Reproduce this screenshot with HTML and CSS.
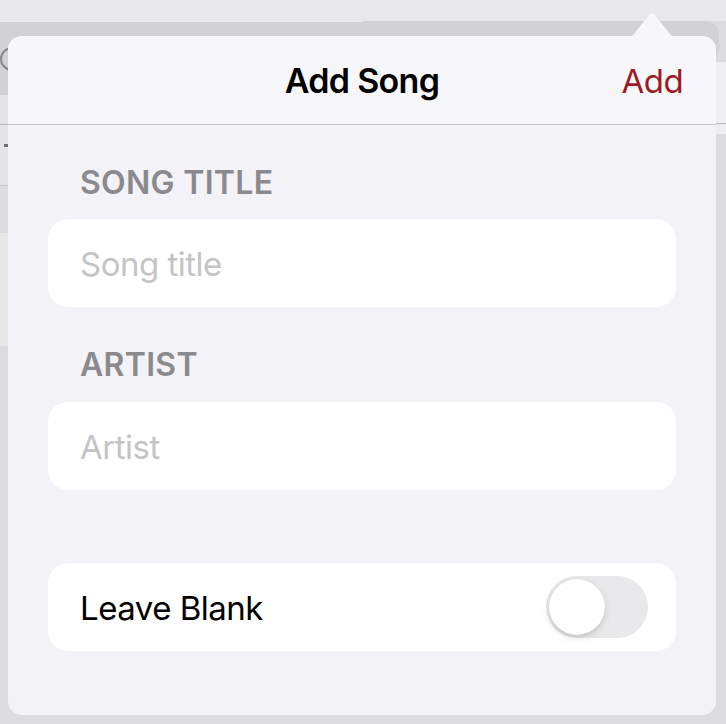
FILE: index.html
```html
<!DOCTYPE html>
<html lang="en">
<head>
<meta charset="utf-8">
<title>Add Song</title>
<link rel="stylesheet" href="styles.css">
</head>
<body>
<div class="backdrop">
  <div class="bg-col bg-left">
    <div class="bg-strip"></div>
    <div class="bg-bar"><span class="bg-ring"></span></div>
    <div class="bg-light bg-light-a"></div>
    <div class="bg-rule"></div>
    <div class="bg-light bg-light-b"><span class="bg-dash"></span></div>
    <div class="bg-rule bg-rule-soft"></div>
    <div class="bg-gap"></div>
    <div class="bg-tile"></div>
  </div>
  <div class="bg-col bg-right">
    <div class="bg-strip bg-strip-r"></div>
    <div class="bg-bar bg-bar-r"></div>
    <div class="bg-light bg-light-r"></div>
    <div class="bg-rule"></div>
    <div class="bg-light bg-light-r2"></div>
  </div>
</div>

<div class="popover">
  <svg class="arrow" width="52" height="26" viewBox="0 0 52 26" aria-hidden="true">
    <path d="M0 26 C4 26 6 25 8 23 L22.6 4.4 Q26 0 29.4 4.4 L44 23 C46 25 48 26 52 26 Z" fill="#f7f7f9"/>
  </svg>
  <header class="nav">
    <h1 class="nav-title">Add Song</h1>
    <button class="nav-action">Add</button>
  </header>
  <main class="form">
    <div class="label label-first">SONG TITLE</div>
    <div class="card"><span class="placeholder">Song title</span></div>
    <div class="label">ARTIST</div>
    <div class="card"><span class="placeholder">Artist</span></div>
    <div class="card card-toggle">
      <span class="row-text">Leave Blank</span>
      <span class="switch"><span class="knob"></span></span>
    </div>
  </main>
</div>
</body>
</html>
```

FILE: styles.css
```css
html, body {
  margin: 0;
  padding: 0;
}
body {
  width: 726px;
  height: 724px;
  overflow: hidden;
  position: relative;
  background: #dcdce0;
  font-family: "Inter", "Noto Sans", sans-serif;
  -webkit-font-smoothing: antialiased;
}

/* ---------- dimmed background ---------- */
.backdrop {
  display: flex;
  width: 726px;
  height: 724px;
}
.bg-col {
  flex: 1;
  display: flex;
  flex-direction: column;
}
.bg-strip {
  height: 22px;
  background: #e8e8ea;
}
.bg-bar {
  height: 73px;
  background: #d2d2d5;
  display: flex;
  align-items: center;
}
.bg-ring {
  width: 20px;
  height: 20px;
  border: 2.5px solid #88888d;
  border-radius: 50%;
  margin-left: 0;
}
.bg-light {
  background: #e4e4e6;
}
.bg-light-a { height: 29px; }
.bg-rule {
  height: 1px;
  background: #b9b9bc;
}
.bg-rule-soft { background: #c8c8cb; }
.bg-light-b {
  height: 60px;
  display: flex;
  align-items: center;
}
.bg-dash {
  width: 5px;
  height: 3px;
  background: #6e6e72;
  margin-left: 4px;
  margin-bottom: 20px;
}
.bg-gap { height: 47px; }
.bg-tile {
  height: 113px;
  background: #e7e7e8;
  border-radius: 0 16px 16px 0;
  margin-right: 40px;
}

.bg-strip-r { height: 21px; }
.bg-bar-r {
  height: 41px;
  border-radius: 0 14px 14px 0;
  margin-right: 7px;
}
.bg-light-r {
  height: 61px;
  background: #efeff1;
}
.bg-light-r2 {
  height: 10px;
  background: #efeff1;
}

/* ---------- popover ---------- */
.popover {
  position: absolute;
  left: 8px;
  top: 36px;
  width: 708px;
  height: 679px;
  background: #f2f2f7;
  border-radius: 14px;
  display: flex;
  flex-direction: column;
}
.arrow {
  position: absolute;
  left: 618px;
  top: -25px;
  display: block;
}
.nav {
  height: 88px;
  flex: none;
  background: #f7f7f9;
  border-bottom: 1px solid #c6c6c8;
  border-radius: 14px 14px 0 0;
  display: flex;
  align-items: center;
  justify-content: center;
  position: relative;
}
.nav-title {
  margin: 0;
  font-size: 34px;
  line-height: 40px;
  font-weight: 600;
  color: #000;
  letter-spacing: -0.7px;
  position: relative;
  top: 1px;
}
.nav-action {
  position: absolute;
  right: 33px;
  top: 25px;
  margin: 0;
  padding: 0;
  border: 0;
  background: none;
  font-family: inherit;
  font-size: 33px;
  line-height: 40px;
  font-weight: 400;
  letter-spacing: -0.6px;
  color: #9b1b23;
}

.form {
  display: flex;
  flex-direction: column;
  padding: 0 40px;
}
.label {
  font-size: 32px;
  line-height: 40px;
  font-weight: 600;
  color: #8a8a8e;
  letter-spacing: 0.3px;
  padding-left: 32px;
  margin-top: 38px;
  margin-bottom: 17px;
}
.label-first {
  margin-top: 38px;
  margin-bottom: 16px;
}
.card {
  height: 88px;
  background: #ffffff;
  border-radius: 20px;
  display: flex;
  align-items: center;
  padding: 0 28px 0 32px;
  font-size: 33px;
  line-height: 40px;
  letter-spacing: -0.5px;
}
.card > span:first-child {
  position: relative;
  top: 1px;
}
.placeholder {
  color: #c4c4c6;
}
.card-toggle {
  margin-top: 73px;
  justify-content: space-between;
}
.row-text {
  color: #000;
}
.switch {
  width: 102px;
  height: 62px;
  border-radius: 31px;
  background: #e9e9eb;
  display: flex;
  align-items: center;
  padding-left: 3px;
  box-sizing: border-box;
}
.knob {
  width: 56px;
  height: 56px;
  border-radius: 50%;
  background: #fff;
  box-shadow: 0 3px 8px rgba(0,0,0,0.12), 0 3px 1px rgba(0,0,0,0.04), 0 0 0 0.5px rgba(0,0,0,0.04);
}
```
